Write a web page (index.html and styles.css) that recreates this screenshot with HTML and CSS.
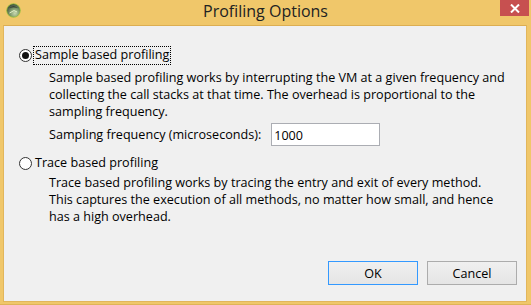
FILE: index.html
```html
<!DOCTYPE html>
<html lang="en">
<head>
  <meta charset="UTF-8">
  <title>Profiling Options</title>
  <link rel="stylesheet" href="styles.css">
</head>
<body>

  <div class="window">
    <div class="titlebar">
      <svg class="app-icon" width="15" height="15" viewBox="0 0 15 15">
        <defs>
          <radialGradient id="ball" cx="0.6" cy="0.7" r="0.7">
            <stop offset="0" stop-color="#c9d9b0"/>
            <stop offset="0.5" stop-color="#7f9a6c"/>
            <stop offset="1" stop-color="#3b4a3c"/>
          </radialGradient>
        </defs>
        <circle cx="7.5" cy="7.5" r="6.8" fill="url(#ball)" stroke="#9bc43a" stroke-width="0.8"/>
        <path d="M3 5 Q7.5 1.5 12 5 Q7.5 3.5 3 5 Z" fill="#2a302c"/>
        <path d="M3.5 10 L8 7.5 L11 9" stroke="#e3f0c8" stroke-width="1" fill="none"/>
      </svg>
      <div class="title">Profiling Options</div>
      <div class="close">
        <svg width="10" height="9" viewBox="0 0 10 9">
          <path d="M1 0.5 L9 8.5 M9 0.5 L1 8.5" stroke="#fff" stroke-width="2"/>
        </svg>
      </div>
    </div>

    <div class="client">
      <div class="option">
        <label class="radio-row">
          <span class="radio checked"><span class="dot"></span></span>
          <span class="radio-label focused">Sample based profiling</span>
        </label>
        <div class="desc">
          <p>Sample based profiling works by interrupting the VM at a given frequency and<br>
          collecting the call stacks at that time. The overhead is proportional to the<br>
          sampling frequency.</p>
          <div class="freq-row">
            <label for="freq">Sampling frequency (microseconds):</label>
            <input type="text" id="freq" value="1000">
          </div>
        </div>
      </div>

      <div class="option">
        <label class="radio-row">
          <span class="radio"></span>
          <span class="radio-label">Trace based profiling</span>
        </label>
        <div class="desc trace">
          <p>Trace based profiling works by tracing the entry and exit of every method.<br>
          This captures the execution of all methods, no matter how small, and hence<br>
          has a high overhead.</p>
        </div>
      </div>

      <div class="buttons">
        <button class="btn default">OK</button>
        <button class="btn">Cancel</button>
      </div>
    </div>
  </div>

</body>
</html>
```

FILE: styles.css
```css
body {
  margin: 0;
  font-family: 'Open Sans', Arial, sans-serif;
}

.window {
  width: 531px;
  height: 305px;
  box-sizing: border-box;
  background-color: #f0c76a;
  border-bottom: 1px solid #e0b457;
  padding: 0 4px 2px 3px;
  display: flex;
  flex-direction: column;
}

.titlebar {
  height: 25px;
  display: flex;
  align-items: flex-start;
}

.app-icon {
  margin: 3px 0 0 3px;
}

.title {
  flex: 1;
  text-align: center;
  font-family: 'Open Sans', sans-serif;
  font-size: 16px;
  color: #222;
  line-height: 22px;
  padding-left: 10px;
}

.close {
  width: 29px;
  height: 16px;
  background-color: #c75050;
  display: flex;
  align-items: center;
  justify-content: center;
  margin-right: -2px;
}

.client {
  flex: 1;
  background-color: #f0f0f0;
  border: 1px solid #e2b65b;
  border-top-color: #dcae52;
  font-size: 12.6px;
  color: #000;
  padding: 20px 0 0 15px;
  display: flex;
  flex-direction: column;
  white-space: nowrap;
}

.radio-row {
  display: flex;
  align-items: center;
  height: 19px;
}

.radio {
  width: 11px;
  height: 11px;
  border: 1px solid #333;
  border-radius: 50%;
  background-color: #fff;
  display: flex;
  align-items: center;
  justify-content: center;
}

.dot {
  width: 7px;
  height: 7px;
  border-radius: 50%;
  background-color: #111;
}

.radio-label {
  margin-left: 1px;
  padding: 0 1px 1px 1px;
  line-height: 16px;
  border: 1px dotted transparent;
}

.radio-label.focused {
  border-color: #000;
}

.desc {
  padding-left: 30px;
  padding-top: 4px;
}

.desc.trace {
  padding-top: 1px;
}

.desc p {
  margin: 0;
  line-height: 17px;
}

.freq-row {
  display: flex;
  align-items: center;
  margin-top: 3px;
  margin-bottom: 8px;
}

.freq-row input {
  margin-left: 10px;
  width: 109px;
  height: 23px;
  box-sizing: border-box;
  border: 1px solid #abadb3;
  background-color: #fff;
  font-family: 'Open Sans', Arial, sans-serif;
  font-size: 12.6px;
  padding: 2px 2px 0;
}

.buttons {
  margin-top: auto;
  margin-bottom: 16px;
  margin-right: 9px;
  display: flex;
  justify-content: flex-end;
  gap: 9px;
}

.btn {
  width: 90px;
  height: 24px;
  border: 1px solid #acacac;
  background: linear-gradient(#f0f0f0, #e5e5e5);
  font-family: 'Open Sans', Arial, sans-serif;
  font-size: 12.6px;
  color: #000;
}

.btn.default {
  border-color: #3399ff;
}
```
